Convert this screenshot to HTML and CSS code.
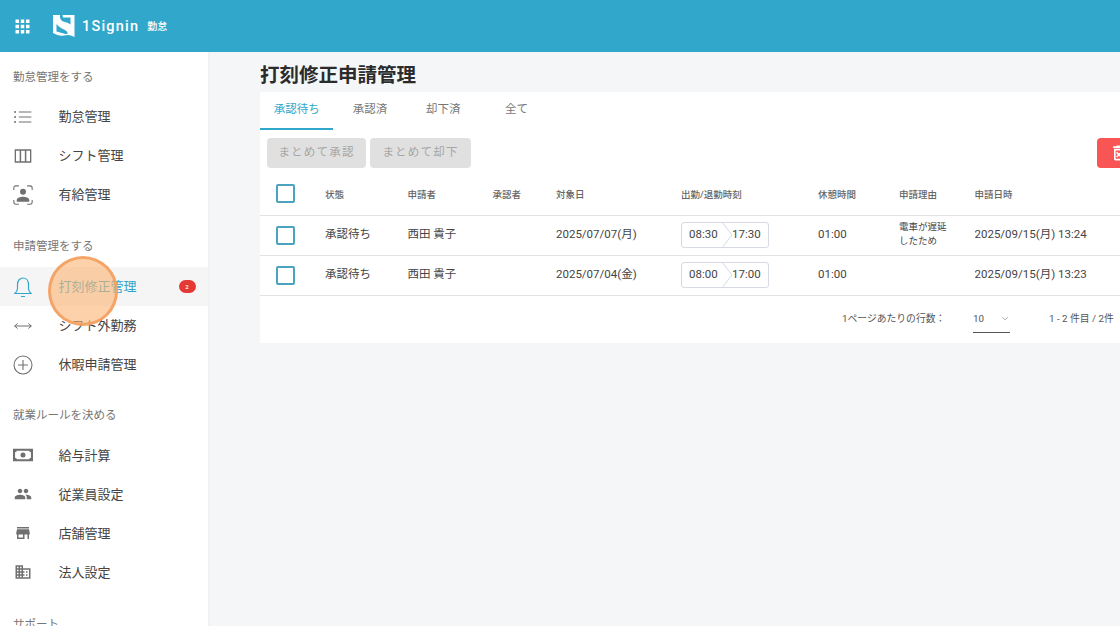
FILE: index.html
```html
<!DOCTYPE html>
<html lang="ja">
<head>
<meta charset="utf-8">
<title>打刻修正申請管理</title>
<link rel="stylesheet" href="styles.css">
</head>
<body>
<div class="app">
  <header class="topbar">
    <svg class="apps" viewBox="0 0 24 24"><path d="M4 8h4V4H4v4zm6 12h4v-4h-4v4zm-6 0h4v-4H4v4zm0-6h4v-4H4v4zm6 0h4v-4h-4v4zm6-10v4h4V4h-4zm-6 4h4V4h-4v4zm6 6h4v-4h-4v4zm0 6h4v-4h-4v4z"/></svg>
    <svg class="logo" viewBox="0 0 22 22"><path fill="#fff" d="M0 0h21.500v22l-3.500-1.500c-2-.7-4.500-.7-7 0-3.500.7-7.500-.5-11-2.500z"/><path fill="#30a7cb" d="M7 0h2.500l.5 2.500h7.500V9.500C15.500 8.300 13 7.300 11 6.800 9 6.200 7.400 4.800 7 2.500zM3.500 9V16.500L12.500 19H14.500C15 17 13.500 15.500 11 14.400 8 13.100 5.500 11.800 3.500 9z"/></svg>
    <span class="brand">1Signin</span>
    <span class="brand-sub">勤怠</span>
  </header>
  <div class="body">
    <nav class="sidebar">
      <section class="nav-group first">
        <div class="nav-label">勤怠管理をする</div>
        <a class="nav-item"><svg class="ico" viewBox="0 0 24 24"><g fill="none" stroke="#707070" stroke-width="1.300"><path d="M7 6h15M7 12h15M7 18h15"/></g><g fill="#707070"><circle cx="2.500" cy="6" r="1.200"/><circle cx="2.500" cy="12" r="1.200"/><circle cx="2.500" cy="18" r="1.200"/></g></svg><span>勤怠管理</span></a>
        <a class="nav-item"><svg class="ico" viewBox="0 0 24 24"><path fill="#707070" d="M2 4v16h20V4H2zm6 14.400H3.600V5.600H8v12.800zm6.200 0H9.800V5.600h4.400v12.800zm6.200 0H16V5.600h4.400v12.800z"/></svg><span>シフト管理</span></a>
        <a class="nav-item"><svg class="ico" viewBox="0 0 24 24"><g fill="none" stroke="#707070" stroke-width="1.300"><path d="M1 6V3.500C1 2 2 1 3.500 1H7M17 1h3.500C22 1 23 2 23 3.500V6M1 18v2.500C1 22 2 23 3.500 23H7M17 23h3.500c1.500 0 2.500-1 2.500-2.500V18"/></g><circle cx="12" cy="8" r="3.600" fill="#707070"/><path fill="#707070" d="M4.500 20v-2c0-2.800 4.500-4 7.500-4s7.500 1.200 7.500 4v2z"/></svg><span>有給管理</span></a>
      </section>
      <section class="nav-group second">
        <div class="nav-label">申請管理をする</div>
        <a class="nav-item active"><svg class="ico bell" viewBox="0 0 24 24"><path fill="none" stroke="#30a7cb" stroke-width="1.200" d="M4 18.500c1.500-1.500 2.500-2.500 2.500-5V9.500C6.500 5.500 9 3 12 3s5.500 2.500 5.500 6.500v4c0 2.500 1 3.500 2.500 5zM10 21.500h4"/></svg><span>打刻修正管理</span><b class="badge">2</b></a>
        <a class="nav-item"><svg class="ico" viewBox="0 0 24 24"><path fill="none" stroke="#707070" stroke-width="1.200" d="M2 12h20M5.500 9L2 12l3.500 3M18.500 9l3.500 3-3.500 3"/></svg><span>シフト外勤務</span></a>
        <a class="nav-item"><svg class="ico" viewBox="0 0 24 24"><g fill="none" stroke="#707070" stroke-width="1.300"><circle cx="12" cy="12" r="10.800"/><path d="M12 6v12M6 12h12"/></g></svg><span>休暇申請管理</span></a>
      </section>
      <section class="nav-group rules">
        <div class="nav-label">就業ルールを決める</div>
        <a class="nav-item"><svg class="ico" viewBox="0 0 24 24"><path fill="#707070" fill-rule="evenodd" d="M0 4.500h24v15H0zM4.500 7c0 1-.8 1.500-2 1.500v7c1.200 0 2 .6 2 1.500h15c0-.9.8-1.500 2-1.500v-7c-1.200 0-2-.5-2-1.500zM12 9a3 3 0 1 1 0 6 3 3 0 0 1 0-6z"/></svg><span>給与計算</span></a>
        <a class="nav-item"><svg class="ico small" viewBox="0 0 24 24"><path fill="#707070" d="M16 11c1.660 0 2.990-1.340 2.990-3S17.660 5 16 5c-1.660 0-3 1.340-3 3s1.340 3 3 3zm-8 0c1.660 0 2.990-1.340 2.990-3S9.660 5 8 5C6.340 5 5 6.340 5 8s1.340 3 3 3zm0 2c-2.330 0-7 1.170-7 3.500V19h14v-2.500c0-2.330-4.670-3.500-7-3.500zm8 0c-.29 0-.62.02-.97.05 1.160.84 1.970 1.970 1.970 3.450V19h6v-2.500c0-2.330-4.670-3.500-7-3.500z"/></svg><span>従業員設定</span></a>
        <a class="nav-item"><svg class="ico small" viewBox="0 0 24 24"><path fill="#707070" d="M20 4H4v2h16V4zm1 10v-2l-1-5H4l-1 5v2h1v6h10v-6h4v6h2v-6h1zm-9 4H6v-4h6v4z"/></svg><span>店舗管理</span></a>
        <a class="nav-item"><svg class="ico small" viewBox="0 0 24 24"><path fill="#707070" d="M12 7V3H2v18h20V7H12zM6 19H4v-2h2v2zm0-4H4v-2h2v2zm0-4H4V9h2v2zm0-4H4V5h2v2zm4 12H8v-2h2v2zm0-4H8v-2h2v2zm0-4H8V9h2v2zm0-4H8V5h2v2zm10 12h-8v-2h2v-2h-2v-2h2v-2h-2V9h8v10zm-2-8h-2v2h2v-2zm0 4h-2v2h2v-2z"/></svg><span>法人設定</span></a>
      </section>
      <section class="nav-group">
        <div class="nav-label">サポート</div>
      </section>
    </nav>
    <main class="main">
      <h1 class="title">打刻修正申請管理</h1>
      <div class="card">
        <div class="tabs">
          <div class="tab selected">承認待ち</div>
          <div class="tab">承認済</div>
          <div class="tab">却下済</div>
          <div class="tab">全て</div>
        </div>
        <div class="actions">
          <button class="btn">まとめて承認</button>
          <button class="btn">まとめて却下</button>
          <button class="btn-danger"><svg viewBox="0 0 24 24"><path fill="#fff" d="M14.120 10.470L12 12.590l-2.130-2.120-1.410 1.410L10.590 14l-2.120 2.120 1.410 1.410L12 15.410l2.120 2.120 1.410-1.410L13.410 14l2.120-2.120zM15.500 4l-1-1h-5l-1 1H5v2h14V4zM6 19c0 1.100.9 2 2 2h8c1.100 0 2-.9 2-2V7H6v12zM8 9h8v10H8V9z"/></svg></button>
        </div>
        <div class="row head">
          <div><span class="check"></span></div>
          <div>状態</div><div>申請者</div><div>承認者</div><div>対象日</div><div>出勤/退勤時刻</div><div>休憩時間</div><div>申請理由</div><div>申請日時</div>
        </div>
        <div class="row">
          <div><span class="check"></span></div>
          <div>承認待ち</div><div>西田 貴子</div><div></div><div>2025/07/07(月)</div>
          <div class="cell-times"><span class="times"><span>08:30</span><svg class="chev" viewBox="0 0 12 26"><path d="M0 0l10 13L0 26" fill="none" stroke="#d5dae6"/></svg><span class="end">17:30</span></span></div>
          <div class="cell-break">01:00</div><div class="reason">電車が遅延<br>したため</div><div>2025/09/15(月) 13:24</div>
        </div>
        <div class="row">
          <div><span class="check"></span></div>
          <div>承認待ち</div><div>西田 貴子</div><div></div><div>2025/07/04(金)</div>
          <div class="cell-times"><span class="times"><span>08:00</span><svg class="chev" viewBox="0 0 12 26"><path d="M0 0l10 13L0 26" fill="none" stroke="#d5dae6"/></svg><span class="end">17:00</span></span></div>
          <div class="cell-break">01:00</div><div></div><div>2025/09/15(月) 13:23</div>
        </div>
        <div class="pager">
          <span class="pager-label">1ページあたりの行数：</span>
          <span class="pager-select"><span>10</span><svg viewBox="0 0 10 6"><path d="M1.500 1.500L5 4.500l3.500-3" fill="none" stroke="#9a9a9a"/></svg></span>
          <span class="pager-range">1 - 2 件目 / 2件</span>
        </div>
      </div>
    </main>
  </div>
  <div class="click-marker"></div>
</div>
</body>
</html>
```
FILE: styles.css
```css
* { box-sizing: border-box; }
html, body { margin: 0; height: 100%; overflow: hidden; }
body {
  font-family: Roboto, "Noto Sans CJK JP", sans-serif;
  color: #333;
  background: #f4f6f8;
}
.app { position: relative; width: 1120px; height: 626px; overflow: hidden; display: flex; flex-direction: column; }
.topbar {
  height: 52px; flex: none; background: #30a7cb;
  display: flex; align-items: center; padding-left: 12px;
}
.apps { width: 21px; height: 21px; fill: #fff; }
.logo { width: 22px; height: 22px; margin-left: 19.500px; }
.brand { margin-left: 7.500px; color: #fff; font-size: 14.500px; font-weight: 500; letter-spacing: 1.200px; }
.brand-sub { margin-left: 8px; padding-bottom: 2px; color: #fff; font-size: 10px; font-weight: 500; }
.body { flex: 1; display: flex; min-height: 0; }
.sidebar {
  width: 208px; flex: none; background: #fff;
  box-shadow: 1px 0 2px rgba(0,0,0,.04);
  padding-top: 14px; overflow: hidden;
}
.nav-group { margin-bottom: 20.500px; }
.nav-label { height: 20px; line-height: 22px; padding-left: 13px; font-size: 11.500px; color: #777; margin-bottom: 12px; }
.nav-group.first { margin-bottom: 21px; }
.nav-group.first .nav-label { margin-bottom: 11px; }
.nav-group.second { margin-bottom: 19.500px; }
.nav-group.rules { margin-bottom: 21px; }
.nav-group.rules .nav-label { margin-bottom: 12px; }
.nav-item { height: 39px; display: flex; align-items: center; padding-left: 13px; font-size: 13px; color: #444; }
.nav-item > span { padding-bottom: 2px; }
.nav-item .ico { width: 20px; height: 20px; flex: none; margin-right: 25.500px; }
.nav-item .ico.small { width: 18px; height: 18px; margin-left: 1px; margin-right: 26.500px; }
.nav-item .ico.bell { width: 24px; height: 24px; margin-left: -2px; margin-right: 23.500px; }
.nav-item.active { background: #f5f5f5; color: #30a7cb; }
.badge {
  margin-left: auto; margin-right: 12.500px; width: 17px; height: 13px; border-radius: 7px;
  background: #e53935; color: #fff; font-size: 6px; font-weight: 500; line-height: 13px; text-align: center;
}
.main { flex: 1; min-width: 0; padding-left: 52px; overflow: hidden; }
.title { margin: 0; height: 40px; line-height: 47px; font-size: 19.500px; font-weight: 700; color: #2b2b2b; }
.card { width: 900px; height: 251px; background: #fff; }
.tabs { display: flex; height: 38px; }
.tab {
  width: 73.300px; height: 38px; line-height: 34px; text-align: center;
  font-size: 11.500px; color: #777;
}
.tab.selected { color: #30a7cb; border-bottom: 2px solid #30a7cb; }
.actions { height: 42px; padding: 8px 0 0 7px; display: flex; gap: 4px; align-items: flex-start; }
.btn {
  width: 99px; height: 30px; border: 0; border-radius: 4px; background: #e0e0e0; color: #a6a6a6;
  font: 400 11.500px Roboto, "Noto Sans CJK JP", sans-serif; letter-spacing: 1.200px; padding: 0 0 5px;
}
.btn + .btn { width: 101px; }
.btn-danger {
  margin-left: 622px; width: 60px; height: 30px; border: 0; border-radius: 4px; background: #fa5555;
  padding: 0 0 0 12px; display: flex; align-items: center;
}
.btn-danger svg { width: 20px; height: 20px; }
.row {
  display: grid;
  grid-template-columns: 65px 82.500px 85px 63.500px 125px 137px 81px 75.500px 185px;
  height: 40px; align-items: center;
  border-bottom: 1px solid #e2e2e2;
  font-size: 11.500px; color: #444;
}
.row > div { white-space: nowrap; padding-bottom: 6px; }
.row > div:first-child { padding: 0 0 0 16px; display: flex; }
.row > div.reason { padding-bottom: 3px; }
.row > div.cell-times { padding-bottom: 2px; }
.row > div.cell-break { padding-bottom: 4px; }
.row.head { height: 44px; color: #666; font-size: 9.500px; font-weight: 500; }
.row.head > div { padding-bottom: 0; }
.check { width: 18.500px; height: 18.500px; border: 2.500px solid #4ba3bd; border-radius: 2px; display: block; }
.reason { font-size: 9.500px; line-height: 14px; }
.times {
  display: inline-flex; align-items: center; width: 88px; height: 26px; vertical-align: middle;
  border: 1px solid #d5dae6; border-radius: 3px; padding: 0 0 2px 7px; font-size: 11.500px; position: relative;
}
.chev { position: absolute; left: 40px; top: -1px; width: 12px; height: 26px; }
.end { position: absolute; left: 50px; }
.pager { height: 47px; display: flex; align-items: center; font-size: 9.800px; color: #555; padding: 0 0 4px 582px; }
.pager-label { width: 131px; white-space: nowrap; }
.pager-select {
  width: 37px; height: 29px; border-bottom: 1px solid #555; display: flex; align-items: center; justify-content: space-between;
  padding-right: 1px; margin-top: 2px;
}
.pager-select svg { width: 8px; height: 5px; }
.pager-range { margin-left: 39px; white-space: nowrap; }
.click-marker {
  position: absolute; left: 48px; top: 256px; width: 70px; height: 70px; border-radius: 50%;
  background: rgba(251,180,115,.6); border: 3px solid rgba(243,160,95,.9);
}
```
